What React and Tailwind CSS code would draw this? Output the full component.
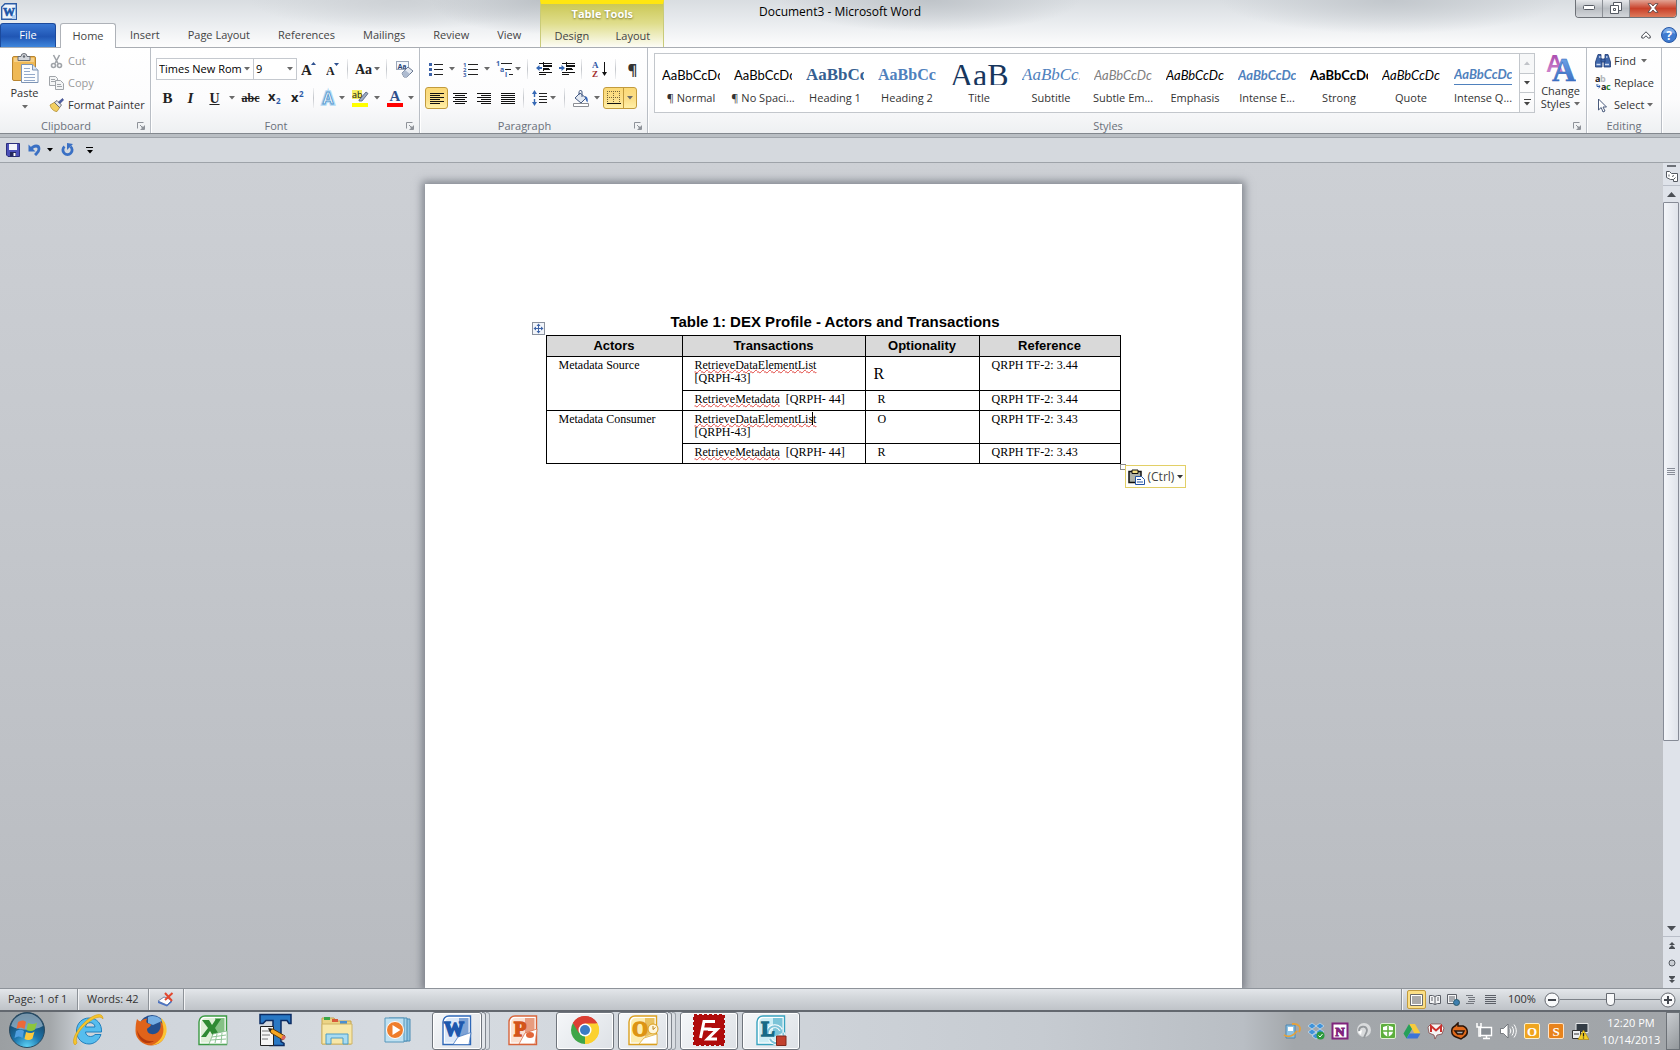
import React, { useState } from "react";
import clsx from "clsx";

const STYLES = [
    { name: "¶ Normal", sample: "AaBbCcDc", look: "font-['Lato'] text-[13px] text-black" },
    { name: "¶ No Spaci...", sample: "AaBbCcDc", look: "font-['Lato'] text-[13px] text-black" },
    { name: "Heading 1", sample: "AaBbCc", look: "font-['Liberation_Serif'] text-[17px] font-bold text-[#365f91]" },
    { name: "Heading 2", sample: "AaBbCc", look: "font-['Liberation_Serif'] text-[16px] font-bold text-[#4f81bd]" },
    { name: "Title", sample: "AaB", look: "font-['Liberation_Serif'] text-[32px] text-[#17365d]" },
    { name: "Subtitle", sample: "AaBbCc.", look: "font-['Liberation_Serif'] text-[17px] italic text-[#4f81bd]" },
    { name: "Subtle Em...", sample: "AaBbCcDc", look: "font-['Lato'] text-[13px] italic text-[#808080]" },
    { name: "Emphasis", sample: "AaBbCcDc", look: "font-['Lato'] text-[13px] italic text-black" },
    { name: "Intense E...", sample: "AaBbCcDc", look: "font-['Lato'] text-[13px] font-bold italic text-[#4f81bd]" },
    { name: "Strong", sample: "AaBbCcDc", look: "font-['Lato'] text-[13px] font-bold text-black" },
    { name: "Quote", sample: "AaBbCcDc", look: "font-['Lato'] text-[13px] italic text-black" },
    { name: "Intense Q...", sample: "AaBbCcDc", look: "font-['Lato'] text-[13px] font-bold italic text-[#4f81bd] border-b border-[#4f81bd]" },
];

/* ---------- small shared pieces ---------- */

function Arrow({ className = "text-[#6a6a6a]" }) {
    return (
        <svg width="6" height="4" viewBox="0 0 6 4" className={clsx("shrink-0", className)}>
            <path d="M0 0h6L3 3.6z" fill="currentColor" />
        </svg>
    );
}

function Tool({ label, className = "w-[23px]", children }) {
    return (
        <button type="button" aria-label={label} className={clsx("flex h-[22px] shrink-0 items-center justify-center", className)}>
            {children}
        </button>
    );
}

function Sep({ className = "mx-1" }) {
    return <span className={clsx("h-[20px] w-px shrink-0 bg-[linear-gradient(#f0f1f3,#c3c6cb,#f0f1f3)]", className)} />;
}

function Launcher() {
    return (
        <svg width="8" height="8" viewBox="0 0 8 8" fill="none" stroke="#8e9299">
            <path d="M.5 6.5v-6h6M3 3l4 4M7.5 3.5v4h-4" />
            <path d="M5 5h2v2H5z" fill="#8e9299" />
        </svg>
    );
}

function Group({ title, launcher, className, children }) {
    return (
        <section className={clsx("flex shrink-0 flex-col border-r border-[#b9bec5] shadow-[1px_0_0_#fff]", className)}>
            <div className="flex h-[68px]">{children}</div>
            <div className={clsx("relative flex h-[17px] items-center justify-center pt-0.5 leading-[15px] text-[#6a707a]", launcher && "pr-[18px]")}>
                {title}
                {launcher && (
                    <button type="button" aria-label={`${title} settings`} className="absolute right-[5px] top-[6px]">
                        <Launcher />
                    </button>
                )}
            </div>
        </section>
    );
}

/* ---------- title bar and tabs ---------- */

function WordMark() {
    return (
        <svg width="16" height="17" viewBox="0 0 16 17">
            <path d="M4 .7h11.3v15.6H.7V4z" fill="#eef5fd" stroke="#2d5ca6" strokeWidth="1.4" />
            <path d="M11 12h4v4h-4z" fill="#b6cfee" />
            <text x="8" y="12.5" textAnchor="middle" fontFamily="Liberation Serif" fontSize="12" fontWeight="bold" fill="#1d55a8" stroke="#1d55a8" strokeWidth=".6">W</text>
        </svg>
    );
}

function Header() {
    const tabs = ["Insert", "Page Layout", "References", "Mailings", "Review", "View"];
    return (
        <header className="relative flex h-12 shrink-0 items-end border-b border-[#a9adb3] bg-[radial-gradient(ellipse_110px_34px_at_540px_0,#bdc2c7,transparent),radial-gradient(ellipse_150px_30px_at_400px_0,#cdd1d5,transparent),radial-gradient(ellipse_150px_32px_at_930px_0,#bfc4c9,transparent),radial-gradient(ellipse_170px_34px_at_1390px_0,#c2c7cc,transparent),linear-gradient(#d9dde1,#e8ebee_45%,#fdfdfd)]">
            <div className="flex h-full flex-col pr-[5px]">
                <div className="flex h-6 items-center pl-px">
                    <WordMark />
                </div>
                <nav className="flex h-6 text-[#444]">
                    <button type="button" className="mr-1 h-6 w-14 rounded-t-[3px] border border-b-0 border-[#1c4a9c] bg-[linear-gradient(#3a78d4,#2056b4_55%,#3f86dc)] text-white">File</button>
                    <button type="button" className="-mb-px h-[25px] w-14 rounded-t-[3px] border border-b-0 border-[#aeb2b8] bg-white">Home</button>
                    {tabs.map((t) => (
                        <button key={t} type="button" className="px-[14px] pt-px">{t}</button>
                    ))}
                </nav>
            </div>
            <div className="flex h-full w-[124px] flex-col border-x border-[#c9cb7a] border-t-4 border-t-[#ffe610] bg-[linear-gradient(#cbc856,#dfdd8b_45%,#fdfdf6)]">
                <div className="flex h-5 items-center justify-center font-bold text-white [text-shadow:0_1px_2px_#7c7a2c]">Table Tools</div>
                <nav className="flex h-6 justify-around text-[#444]">
                    <button type="button" className="pt-px">Design</button>
                    <button type="button" className="pt-px">Layout</button>
                </nav>
            </div>
            <h1 className="pointer-events-none absolute inset-x-0 top-0 text-center text-xs leading-6 text-black">Document3 - Microsoft Word</h1>
            <div className="ml-auto flex h-full flex-col items-end pr-[3px]">
                <div className="flex h-[18px] overflow-hidden rounded-b-[4px] border border-t-0 border-[#6d7177]">
                    <button type="button" aria-label="Minimize" className="flex w-[27px] items-center justify-center border-r border-[#8b8f95] bg-[linear-gradient(#e6e8eb,#b9bdc2_50%,#d3d6da)]">
                        <svg width="12" height="6"><rect x=".5" y=".5" width="11" height="4" rx="1" fill="#fff" stroke="#555a63" /></svg>
                    </button>
                    <button type="button" aria-label="Restore" className="flex w-[27px] items-center justify-center border-r border-[#8b8f95] bg-[linear-gradient(#e6e8eb,#b9bdc2_50%,#d3d6da)]">
                        <svg width="12" height="12" fill="#fff" stroke="#555a63"><path d="M3.5.5h8v8h-8z" /><path d="M.5 3.5h8v8h-8z" /><path d="M3.5 6.5h2v2h-2z" /></svg>
                    </button>
                    <button type="button" aria-label="Close" className="flex w-[46px] items-center justify-center bg-[linear-gradient(#e2a394,#c9412a_50%,#de7a5b)]">
                        <svg width="12" height="10" viewBox="0 0 12 10"><path d="M1 .7h3l2 2.300 2-2.300h3L7.700 5 11 9.300H8L6 7 4 9.300H1L4.300 5z" fill="#fff" stroke="#5d4747" strokeWidth=".9" /></svg>
                    </button>
                </div>
                <div className="flex h-[30px] items-center gap-[10px] pt-[5px]">
                    <button type="button" aria-label="Minimize the ribbon">
                        <svg width="10" height="8" viewBox="0 0 10 8" fill="#fff" stroke="#44484f"><path d="M5 .8 9.200 5v2H7.300L5 4.800 2.700 7H.8V5z" /></svg>
                    </button>
                    <button type="button" aria-label="Help">
                        <svg width="16" height="16" viewBox="0 0 16 16">
                            <circle cx="8" cy="8" r="7.5" fill="#3f7bd0" stroke="#2a59a5" />
                            <path d="M2 7a6 6 0 0 1 12 0C11 5 5 5 2 7z" fill="#7aa9e6" />
                            <text x="8" y="12.5" textAnchor="middle" fontFamily="Open Sans" fontSize="12" fontWeight="bold" fill="#fff">?</text>
                        </svg>
                    </button>
                </div>
            </div>
        </header>
    );
}

/* ---------- ribbon groups ---------- */

function ClipboardGroup() {
    return (
        <Group title="Clipboard" launcher className="w-[151px]">
            <button type="button" className="flex w-[49px] flex-col items-center pt-[5px] text-[#333]">
                <svg width="28" height="31" viewBox="0 0 28 31">
                    <rect x="1.500" y="3.500" width="23" height="24" rx="1.500" fill="#efb956" stroke="#b98530" />
                    <path d="M3 5h20v4H3z" fill="#f6d08a" />
                    <path d="M7 3.500h3a3 3 0 0 1 6 0h3v4H7z" fill="#d4d7dc" stroke="#666b74" />
                    <circle cx="13" cy="3.500" r="1.200" fill="#666b74" />
                    <path d="M10.500 11.500h11l5.500 5.500v12.500H10.500z" fill="#fbfdff" stroke="#7d94b5" />
                    <path d="M21.500 11.500V17H27" fill="#d7e3f3" stroke="#7d94b5" />
                    <path d="M13 15.500h6M13 18.500h6M13 21.500h11M13 24.500h11M13 27.500h11" stroke="#93a9ca" />
                </svg>
                <span className="leading-[18px]">Paste</span>
                <Arrow className="mt-[3px] text-[#6a6a6a]" />
            </button>
            <div className="flex flex-col items-start pt-0.5">
                <button type="button" className="flex h-[22px] items-center gap-1 text-[#9a9a9a]">
                    <svg width="15" height="15" viewBox="0 0 15 15" fill="none" stroke="#9fa3a8" strokeWidth="1.600">
                        <path d="M4.500 1 9 9.500M10.500 1 6 9.500" /><circle cx="4.500" cy="11.500" r="2" /><circle cx="10.500" cy="11.500" r="2" />
                    </svg>
                    Cut
                </button>
                <button type="button" className="flex h-[22px] items-center gap-1 text-[#9a9a9a]">
                    <svg width="15" height="14" viewBox="0 0 15 14" fill="#f4f5f6" stroke="#a0a4a9">
                        <path d="M.5.5h6l2 2v7h-8z" /><path d="M2 3.500h4M2 5.500h4" /><path d="M6.500 4.500h5l3 3v6h-8z" /><path d="M8 8.500h4M8 10.500h5" />
                    </svg>
                    Copy
                </button>
                <button type="button" className="flex h-[22px] items-center gap-1 whitespace-nowrap text-[#333]">
                    <svg width="15" height="14" viewBox="0 0 15 14">
                        <path d="M1 7l5-3 5 5-3 4.500c-3 0-6-2.500-7-6.500z" fill="#f2cf62" stroke="#a98325" strokeWidth=".7" />
                        <path d="M5.500 4.500 8 2.500l4.500 4.500-2 2.500z" fill="#e2e5ea" stroke="#4b4f5a" strokeWidth=".8" />
                        <path d="m9.500 4 4-3.500L14.500 2 11 5.500z" fill="#4b5ea8" stroke="#2e3a75" strokeWidth=".6" />
                    </svg>
                    Format Painter
                </button>
            </div>
        </Group>
    );
}

function FontGroup() {
    return (
        <Group title="Font" launcher className="w-[269px]">
            <div className="flex flex-col gap-[7px] pl-[5px] pt-[10px]">
                <div className="flex items-center">
                    <label className="relative">
                        <select aria-label="Font" className="h-[22px] w-[98px] appearance-none border border-[#c5c9cf] bg-white pl-0.5 text-[11px] text-black">
                            <option>Times New Rom</option>
                        </select>
                        <span className="pointer-events-none absolute right-1 top-[9px]"><Arrow /></span>
                    </label>
                    <label className="relative -ml-px">
                        <select aria-label="Font size" className="h-[22px] w-[44px] appearance-none border border-[#c5c9cf] bg-white pl-0.5 text-[11px] text-black">
                            <option>9</option>
                        </select>
                        <span className="pointer-events-none absolute right-1 top-[9px]"><Arrow /></span>
                    </label>
                    <Tool label="Grow font" className="w-[24px]">
                        <svg width="16" height="16" viewBox="0 0 16 16"><text x="0" y="14" fontFamily="Liberation Serif" fontSize="15" fontWeight="bold" fill="#222">A</text><path d="m10 4 2.500-3L15 4z" fill="#2d4f8f" /></svg>
                    </Tool>
                    <Tool label="Shrink font">
                        <svg width="14" height="16" viewBox="0 0 14 16"><text x="0" y="14" fontFamily="Liberation Serif" fontSize="12" fontWeight="bold" fill="#222">A</text><path d="m8 2 2.500 3L13 2z" fill="#2d4f8f" /></svg>
                    </Tool>
                    <Sep className="ml-[3px] mr-[6px]" />
                    <Tool label="Change case" className="w-[27px] gap-0.5">
                        <span className="font-['Liberation_Serif'] text-[14px] font-bold text-[#222]">Aa</span><Arrow />
                    </Tool>
                    <Sep className="ml-[5px] mr-[6px]" />
                    <Tool label="Clear formatting">
                        <svg width="18" height="17" viewBox="0 0 18 17">
                            <rect x=".5" y=".5" width="12" height="8" fill="#f4f8fd" stroke="#9aa7ba" />
                            <text x="1.500" y="7.500" fontFamily="Liberation Sans" fontSize="7" fontWeight="bold" fill="#223f74">Aa</text>
                            <path d="m6 12 6-6 5 4-6 6H8z" fill="#e3e9f2" stroke="#69778f" /><path d="m6 12 3-3 5 4-3 3H8z" fill="#aebbd0" />
                        </svg>
                    </Tool>
                </div>
                <div className="flex items-center text-[#222]">
                    <Tool label="Bold"><b className="font-['Liberation_Serif'] text-[15px]">B</b></Tool>
                    <Tool label="Italic"><i className="font-['Liberation_Serif'] text-[15px] font-bold">I</i></Tool>
                    <Tool label="Underline" className="w-[25px]"><u className="font-['Liberation_Serif'] text-[14px] font-bold">U</u></Tool>
                    <Tool label="Underline style" className="w-[10px]"><Arrow /></Tool>
                    <Tool label="Strikethrough" className="w-[27px]"><s className="font-['Liberation_Serif'] text-[12px] font-bold">abc</s></Tool>
                    <Tool label="Subscript">
                        <svg width="15" height="16" viewBox="0 0 15 16" className="overflow-visible"><text x="0" y="11" fontFamily="Open Sans" fontSize="13" fontWeight="bold" fill="#222">x</text><text x="8" y="14" fontFamily="Open Sans" fontSize="8" fontWeight="bold" fill="#2d5aa8">2</text></svg>
                    </Tool>
                    <Tool label="Superscript" className="w-[22px]">
                        <svg width="15" height="16" viewBox="0 0 15 16" className="overflow-visible"><text x="0" y="12" fontFamily="Open Sans" fontSize="13" fontWeight="bold" fill="#222">x</text><text x="8" y="7" fontFamily="Open Sans" fontSize="8" fontWeight="bold" fill="#2d5aa8">2</text></svg>
                    </Tool>
                    <Sep className="ml-[4px] mr-[4px]" />
                    <Tool label="Text effects" className="w-[28px] gap-0.5">
                        <svg width="18" height="18" viewBox="0 0 18 18" className="overflow-visible"><text x="9" y="15" textAnchor="middle" fontFamily="Liberation Sans" fontSize="16" fontWeight="bold" fill="#fff" stroke="#b5daf5" strokeWidth="3.500">A</text><text x="9" y="15" textAnchor="middle" fontFamily="Liberation Sans" fontSize="16" fontWeight="bold" fill="#fff" stroke="#5a9bd0" strokeWidth="1">A</text></svg>
                        <Arrow />
                    </Tool>
                    <Tool label="Highlight colour" className="ml-[6px] w-[28px] gap-[5px]">
                        <svg width="17" height="17" viewBox="0 0 17 17"><path d="M0 0h10v9H0z" fill="#f5ef62" /><text x="0" y="8" fontFamily="Open Sans" fontSize="9" fill="#111">ab</text><path d="m7 10 7-8 2 1.500L10 11H7z" fill="#9dabc4" stroke="#4d5a78" strokeWidth=".8" /><path d="M0 13h16v4H0z" fill="#ff0" /></svg>
                        <Arrow />
                    </Tool>
                    <Tool label="Font colour" className="ml-[6px] w-[28px] gap-[5px]">
                        <svg width="16" height="17" viewBox="0 0 16 17"><text x="8" y="11" textAnchor="middle" fontFamily="Liberation Serif" fontSize="15" fontWeight="bold" fill="#2f4f8b">A</text><path d="M0 13h16v4H0z" fill="#f00" /></svg>
                        <Arrow />
                    </Tool>
                </div>
            </div>
        </Group>
    );
}

const LEFT = [[0, 14], [0, 10], [0, 14], [0, 10], [0, 14], [0, 10]];
const CENTER = [[0, 14], [2, 10], [0, 14], [2, 10], [0, 14], [2, 10]];
const RIGHT = [[0, 14], [4, 10], [0, 14], [4, 10], [0, 14], [4, 10]];
const FULL = [[0, 14], [0, 14], [0, 14], [0, 14], [0, 14], [0, 14]];

function AlignIcon({ rows }) {
    return (
        <svg width="14" height="13" viewBox="0 0 14 13" stroke="#111">
            {rows.map(([x, w], i) => <path key={i} d={`M${x} ${i * 2 + 1.5}h${w}`} />)}
        </svg>
    );
}

function IndentIcon({ back }) {
    return (
        <svg width="17" height="14" viewBox="0 0 17 14">
            <path d="M3 1.500h13M7 4.500h9M7 7.500h7M3 10.500h13M3 12.500h7" stroke="#111" />
            <path d="M7 3.500h9M7 6.500h6" stroke="#111" />
            <path d="M7.500 0v14" stroke="#111" strokeDasharray="1 1" />
            <path d={back ? "M0 6 3.500 3v2H6v2H3.500v2z" : "M6 6 2.500 3v2H0v2h2.500v2z"} fill="#3568b5" />
        </svg>
    );
}

function ParagraphGroup() {
    return (
        <Group title="Paragraph" launcher className="w-[228px]">
            <div className="flex flex-col gap-[7px] pl-[5px] pt-[10px]">
                <div className="flex items-center">
                    <Tool label="Bullets" className="w-[34px] gap-[6px]">
                        <svg width="14" height="14" viewBox="0 0 14 14"><path d="M0 1h3v3H0zM0 6h3v3H0zM0 11h3v3H0z" fill="#3c62a8" /><path d="M5 2.500h9M5 7.500h9M5 12.500h9" stroke="#222" /></svg>
                        <Arrow />
                    </Tool>
                    <Tool label="Numbering" className="w-[35px] gap-[6px]">
                        <svg width="15" height="15" viewBox="0 0 15 15"><g fontFamily="Open Sans" fontSize="6" fontWeight="bold" fill="#3c62a8"><text x="0" y="5">1</text><text x="0" y="10">2</text><text x="0" y="15">3</text></g><path d="M5 2.500h10M5 7.500h10M5 12.500h10" stroke="#222" /></svg>
                        <Arrow />
                    </Tool>
                    <Tool label="Multilevel list" className="w-[28px] gap-[2px]">
                        <svg width="17" height="16" viewBox="0 0 17 16"><g fontFamily="Open Sans" fontSize="7" fontWeight="bold" fill="#3c62a8"><text x="0" y="5">1</text><text x="4" y="11">a</text><text x="9" y="16">i</text></g><path d="M5 2.500h11M9 8.500h6M13 13.500h4" stroke="#222" /></svg>
                        <Arrow />
                    </Tool>
                    <Sep className="ml-[5px] mr-[5px]" />
                    <Tool label="Decrease indent"><IndentIcon back /></Tool>
                    <Tool label="Increase indent"><IndentIcon /></Tool>
                    <Sep className="ml-[2px] mr-[6px]" />
                    <Tool label="Sort">
                        <svg width="16" height="16" viewBox="0 0 16 16"><g fontFamily="Liberation Serif" fontSize="9" fontWeight="bold"><text x="0" y="7" fill="#2f58a5">A</text><text x="0" y="15.500" fill="#a12c2c">Z</text></g><path d="M12.500 1v11" stroke="#111" /><path d="M10 11h5l-2.500 4z" fill="#111" /></svg>
                    </Tool>
                    <Sep className="ml-[4px] mr-[5px]" />
                    <Tool label="Show marks"><span className="text-[15px] font-bold text-[#333]">¶</span></Tool>
                </div>
                <div className="flex items-center">
                    <Tool label="Align left" className="w-[23px] rounded-[3px] border border-[#c29b3d] bg-[linear-gradient(#fbd977,#fbe08c_60%,#fff0a8)]"><AlignIcon rows={LEFT} /></Tool>
                    <Tool label="Center" className="w-[24px]"><AlignIcon rows={CENTER} /></Tool>
                    <Tool label="Align right" className="w-[24px]"><AlignIcon rows={RIGHT} /></Tool>
                    <Tool label="Justify"><AlignIcon rows={FULL} /></Tool>
                    <Sep className="mx-[4px]" />
                    <Tool label="Line spacing" className="w-[32px] gap-0.5">
                        <svg width="16" height="16" viewBox="0 0 16 16"><path d="M0 4 2.500 0 5 4H3.200v3H1.800V4zM0 12l2.500 4L5 12H3.200V9H1.800v3z" fill="#3568b5" /><path d="M7 3.500h8M7 6.500h8M7 9.500h8M7 12.500h8" stroke="#222" /></svg>
                        <Arrow />
                    </Tool>
                    <Sep className="mx-[4px]" />
                    <Tool label="Shading" className="w-[34px] gap-[5px]">
                        <svg width="16" height="17" viewBox="0 0 16 17"><path d="m2 8 5-5 6 5-5 5z" fill="#e3e9f2" stroke="#445a83" /><path d="M6 5V1.500C7 0 9 0 9 2v5" fill="none" stroke="#445a83" /><path d="M12 6c3 1 3 4 2.500 6.500C13 11 12 9 12 6z" fill="#3a69b8" /><path d="M.5 13.500h15v3H.5z" fill="#fff" stroke="#8c8f95" /></svg>
                        <Arrow />
                    </Tool>
                    <div className="flex h-[22px] w-[34px] overflow-hidden rounded-[3px] border border-[#c29b3d] bg-[linear-gradient(#fbd977,#fbe08c_60%,#fff0a8)]">
                        <button type="button" aria-label="Bottom border" className="flex w-[20px] items-center justify-center border-r border-[#c29b3d]">
                            <svg width="14" height="14" viewBox="0 0 14 14"><path d="M.5 0v12M6.500 0v12M12.500 0v12M0 .5h13M0 6.500h13" stroke="#75653b" strokeDasharray="1 1" /><path d="M0 12.500h14" stroke="#111" strokeWidth="1" /></svg>
                        </button>
                        <button type="button" aria-label="Border options" className="flex w-[12px] items-center justify-center"><Arrow /></button>
                    </div>
                </div>
            </div>
        </Group>
    );
}

function StylesGroup() {
    return (
        <Group title="Styles" launcher className="min-w-0 flex-1">
            <div className="mt-[5px] flex h-[60px] min-w-0 flex-1 pl-[6px]">
                <div className="flex min-w-0 flex-1 overflow-hidden border border-[#c3c7cc] bg-white">
                    {STYLES.map((s) => (
                        <button key={s.name} type="button" className="flex w-[72px] shrink-0 flex-col items-center pt-[8px] text-[#333]">
                            <span className={clsx("flex h-[23px] w-[58px] items-end overflow-hidden whitespace-nowrap leading-[20px]", s.look)}>{s.sample}</span>
                            <span className="mt-[5px] whitespace-nowrap leading-[16px]">{s.name}</span>
                        </button>
                    ))}
                </div>
                <div className="flex w-[15px] flex-col border border-l-0 border-[#c3c7cc]">
                    <button type="button" aria-label="Scroll up" className="flex flex-1 items-center justify-center bg-[#f6f7f8]"><Arrow className="rotate-180 text-[#c0c3c8]" /></button>
                    <button type="button" aria-label="Scroll down" className="flex flex-1 items-center justify-center border-y border-[#c3c7cc]"><Arrow className="text-[#444]" /></button>
                    <button type="button" aria-label="More styles" className="flex flex-1 flex-col items-center justify-center gap-0.5"><span className="h-px w-[7px] bg-[#444]" /><Arrow className="text-[#444]" /></button>
                </div>
            </div>
            <button type="button" className="flex w-[51px] shrink-0 flex-col items-center pt-[5px] leading-[13px] text-[#333]">
                <svg width="30" height="31" viewBox="0 0 30 31">
                    <defs>
                        <linearGradient id="csA" x2="0" y2="1"><stop stopColor="#a13fa8" /><stop offset="1" stopColor="#d691d3" /></linearGradient>
                        <linearGradient id="csB" x2="0" y2="1"><stop stopColor="#7ab0ef" /><stop offset="1" stopColor="#2e63bd" /></linearGradient>
                    </defs>
                    <text x="0" y="19" fontFamily="Liberation Sans" fontSize="24" fontWeight="bold" fill="url(#csA)">A</text>
                    <text x="6" y="28" fontFamily="Liberation Serif" fontSize="33" fontWeight="bold" fill="url(#csB)" stroke="#3565b8" strokeWidth=".5">A</text>
                </svg>
                <span>Change</span>
                <span className="flex items-center gap-1">Styles <Arrow /></span>
            </button>
        </Group>
    );
}

function EditingGroup() {
    return (
        <Group title="Editing" className="w-[75px]">
            <div className="flex flex-col items-start pl-[8px] pt-0.5 text-[#333]">
                <button type="button" className="flex h-[22px] items-center gap-[3px]">
                    <svg width="16" height="14" viewBox="0 0 16 14" fill="#3f67ab" stroke="#1f3b73" strokeWidth=".8">
                        <path d="M3 .5h3V4l1 2v7H.5V8z" /><path d="M10 .5h3L15.500 8v5H9V6l1-2z" /><path d="M6 5h4v3H6z" /><path d="M1.500 10.500h4M10 10.500h4M4 3h1.500M11 3h1.500" stroke="#cfdcf2" strokeWidth="1.500" />
                    </svg>
                    Find <Arrow className="ml-0.5 text-[#6a6a6a]" />
                </button>
                <button type="button" className="flex h-[22px] items-center gap-[3px]">
                    <svg width="16" height="16" viewBox="0 0 16 16" fontFamily="Open Sans" fontSize="9" fontWeight="bold">
                        <text x="0" y="7" fill="#222">a</text><text x="5" y="7" fill="#b3b6ba">b</text><text x="6" y="15" fill="#222">a</text><text x="11" y="15" fill="#1f8a2d">c</text>
                        <path d="M2 9v2.500h3M3.500 10l1.700 1.500L3.500 13" fill="none" stroke="#2d5aa8" />
                    </svg>
                    Replace
                </button>
                <button type="button" className="flex h-[22px] items-center gap-[3px]">
                    <svg width="16" height="15" viewBox="0 0 16 15"><path d="M3.500 1v11l2.700-2.500L8 14l2-1-2-4h3.500z" fill="#fff" stroke="#4a5b7c" /></svg>
                    Select <Arrow />
                </button>
            </div>
        </Group>
    );
}

function QuickAccess() {
    return (
        <div className="mt-[3px] flex h-[26px] shrink-0 items-center border-y border-[#9ea3a9] bg-[#d5d9de] pl-[6px]">
            <button type="button" aria-label="Save">
                <svg width="14" height="14" viewBox="0 0 14 14"><path d="M.5.5h13v13H2l-1.500-1.500z" fill="#4b50b8" stroke="#2b2f7d" /><path d="M3 1h8v6H3z" fill="#f2f4fb" /><path d="M4 9h6v4.500H4z" fill="#25285e" /><path d="M7.500 10h2v3h-2z" fill="#fff" /></svg>
            </button>
            <button type="button" aria-label="Undo" className="ml-[8px]">
                <svg width="13" height="14" viewBox="0 0 13 14"><path d="M3 6c3-4 8-4 8 0 0 3-2 4-4 6" fill="none" stroke="#3a70c4" strokeWidth="2.800" /><path d="M.5 1.500v7h7z" fill="#3a70c4" /></svg>
            </button>
            <button type="button" aria-label="Undo history" className="ml-[6px]"><Arrow className="text-black" /></button>
            <button type="button" aria-label="Repeat" className="ml-[8px]">
                <svg width="13" height="14" viewBox="0 0 13 14"><path d="M3.500 3.500a4.600 4.600 0 1 0 6 0" fill="none" stroke="#3a70c4" strokeWidth="2.800" /><path d="M6 0v7l6-6z" fill="#3a70c4" /></svg>
            </button>
            <button type="button" aria-label="Customize" className="ml-[12px] flex flex-col items-center gap-0.5"><span className="h-px w-[7px] bg-black" /><Arrow className="text-black" /></button>
        </div>
    );
}

/* ---------- document ---------- */

function Misspelt({ children }) {
    return <span className="underline decoration-[#e0443e] decoration-wavy decoration-1 underline-offset-0">{children}</span>;
}

function ActorsTable() {
    const cell = "border border-black px-3 pt-[2px] align-top";
    return (
        <div className="relative mx-auto w-[575px]">
            <table className="w-full table-fixed border-collapse font-['Liberation_Serif',serif] text-xs leading-[13px] text-black">
                <caption className="pb-[3px] pl-[4px] font-['Liberation_Sans',sans-serif] text-[15px] font-bold leading-5">Table 1: DEX Profile - Actors and Transactions</caption>
                <colgroup>
                    <col className="w-[136px]" /><col className="w-[183px]" /><col className="w-[114px]" /><col />
                </colgroup>
                <thead>
                    <tr className="h-[21px] bg-[#d9d9d9] font-['Liberation_Sans',sans-serif] text-[13px]">
                        {["Actors", "Transactions", "Optionality", "Reference"].map((h) => (
                            <th key={h} scope="col" className="border border-black pb-[2px] font-bold">{h}</th>
                        ))}
                    </tr>
                </thead>
                <tbody>
                    <tr className="h-[34px]">
                        <td rowSpan={2} className={cell}>Metadata Source</td>
                        <td className={cell}><Misspelt>RetrieveDataElementList</Misspelt><br />[QRPH-43]</td>
                        <td className="border border-black px-2 text-base">R</td>
                        <td className={cell}>QRPH TF-2: 3.44</td>
                    </tr>
                    <tr className="h-[20px]">
                        <td className={cell}><Misspelt>RetrieveMetadata</Misspelt>&nbsp; [QRPH- 44]</td>
                        <td className={cell}>R</td>
                        <td className={cell}>QRPH TF-2: 3.44</td>
                    </tr>
                    <tr className="h-[33px]">
                        <td rowSpan={2} className={cell}>Metadata Consumer</td>
                        <td className={cell}>
                            <span className="relative">
                                <Misspelt>RetrieveDataElementList</Misspelt>
                                <span className="absolute right-[3px] top-0 h-[13px] w-px bg-black" />
                            </span>
                            <br />[QRPH-43]
                        </td>
                        <td className={cell}>O</td>
                        <td className={cell}>QRPH TF-2: 3.43</td>
                    </tr>
                    <tr className="h-[20px]">
                        <td className={cell}><Misspelt>RetrieveMetadata</Misspelt>&nbsp; [QRPH- 44]</td>
                        <td className={cell}>R</td>
                        <td className={cell}>QRPH TF-2: 3.43</td>
                    </tr>
                </tbody>
            </table>
            {/* table handles and paste options float beside the table */}
            <svg width="13" height="13" viewBox="0 0 13 13" className="absolute -left-[14px] top-[10px]">
                <rect x=".5" y=".5" width="12" height="12" fill="#f2f5fa" stroke="#8b929e" />
                <path d="M6.500 2v9M2 6.500h9" stroke="#3e64a8" /><path d="m4.500 4 2-2.500 2 2.500zM4.500 9l2 2.500 2-2.500zM4 4.500 1.500 6.500 4 8.500zM9 4.500l2.500 2L9 8.500z" fill="#3e64a8" />
            </svg>
            <span className="absolute -right-[5px] -bottom-[6px] h-[6px] w-[6px] border border-[#8a8a8a] bg-white" />
            <button type="button" className="absolute left-full top-full ml-[4px] mt-[1px] flex h-[23px] w-[61px] items-center gap-[3px] border border-[#e2cf66] bg-[#fffffb] pl-0.5 text-xs text-[#444]">
                <svg width="17" height="16" viewBox="0 0 17 16">
                    <path d="M1 2.500h12v11H1z" fill="#aeb2a8" stroke="#111" strokeWidth="1.500" /><path d="M4 1h6v3.500H4z" fill="#f3df85" stroke="#111" />
                    <path d="M7.500 7.500h6l3 3v5h-9z" fill="#fff" stroke="#2354a5" /><path d="M9 10.500h4M9 13h6" stroke="#2354a5" />
                </svg>
                (Ctrl)
                <Arrow className="text-[#333]" />
            </button>
        </div>
    );
}

function ScrollBar() {
    return (
        <aside className="flex w-[17px] shrink-0 flex-col items-center bg-[#dfe3ea] text-[#4b4f55]">
            <span className="mt-[2px] h-[2px] w-[9px] bg-[#6d7178]" />
            <button type="button" aria-label="Toggle ruler" className="mt-[3px]">
                <svg width="12" height="12" viewBox="0 0 12 12" fill="#fff" stroke="#555a62"><path d="M.5 1.500h3l2 2h6v8h-4v-2h-3l-4-2z" /><path d="M3 4.500v2M6 6.500l2-1M7.500 9.500l2-2" /></svg>
            </button>
            <button type="button" aria-label="Scroll page up" className="mt-[3px] flex h-[17px] w-full items-center justify-center border-t border-[#b9bec8]">
                <svg width="9" height="5"><path d="M0 5 4.500 0 9 5z" fill="currentColor" /></svg>
            </button>
            <div className="flex w-full flex-1 flex-col items-start">
                <div className="flex h-3/4 w-[16px] items-center justify-center rounded-[1px] border border-[#868b96] bg-[linear-gradient(90deg,#f4f6fa,#dfe3ea)]">
                    <span className="h-[7px] w-[8px] bg-[repeating-linear-gradient(#888d98_0_1px,transparent_1px_2px)]" />
                </div>
            </div>
            <button type="button" aria-label="Scroll page down" className="flex h-[17px] w-full items-center justify-center border-b border-[#b9bec8]">
                <svg width="9" height="5"><path d="M0 0h9L4.500 5z" fill="currentColor" /></svg>
            </button>
            <button type="button" aria-label="Previous page" className="flex h-[17px] items-center"><svg width="6" height="7"><path d="m0 3 3-3 3 3zM0 6l3-3 3 3v1H0z" fill="currentColor" /></svg></button>
            <button type="button" aria-label="Browse object" className="flex h-[17px] items-center"><svg width="8" height="8"><circle cx="4" cy="4" r="3" fill="#c9cdd3" stroke="#555a62" /></svg></button>
            <button type="button" aria-label="Next page" className="flex h-[17px] items-center"><svg width="6" height="7"><path d="M0 0h6v1L3 4 0 1zM0 4h6L3 7z" fill="currentColor" /></svg></button>
        </aside>
    );
}

/* ---------- status bar ---------- */

function StatusBar() {
    const [zoom, setZoom] = useState(50);
    const mark = "h-full w-px bg-[#8d9298] shadow-[1px_0_0_#f3f4f6]";
    return (
        <footer className="flex h-[22px] shrink-0 items-center border-t border-[#8e939a] bg-[linear-gradient(#e3e6ea,#d3d7db_40%,#bfc3c8)] text-[#333]">
            <span className="w-[77px] pl-[8px]">Page: 1 of 1</span>
            <span className={mark} />
            <span className="w-[70px] pl-[9px]">Words: 42</span>
            <span className={mark} />
            <button type="button" aria-label="Proofing errors" className="flex w-[34px] justify-center">
                <svg width="18" height="15" viewBox="0 0 18 15"><path d="m1 9 6-4 8 3-5 5z" fill="#fff" stroke="#7787a8" /><path d="m1 9 9 4v1.500L1 11zM10 13l5-5v2l-5 4.500z" fill="#4a72c4" /><path d="m8 1 7 8M15.500 1 8 8" stroke="#e2482f" strokeWidth="2" /></svg>
            </button>
            <span className={mark} />
            <span className={clsx(mark, "ml-auto")} />
            <div className="flex items-center pl-[5px]">
                <button type="button" aria-label="Print layout" className="flex h-[19px] w-[19px] items-center justify-center rounded-[2px] border border-[#c29b3d] bg-[#fbdf86]">
                    <svg width="13" height="12"><path d="M.5.5h12v11H.5z" fill="#fff" stroke="#6a6a6a" /><path d="M2 3h9M2 5h9M2 7h9M2 9h9" stroke="#555" /></svg>
                </button>
                <button type="button" aria-label="Full screen reading" className="flex w-[18px] justify-center">
                    <svg width="12" height="12" fill="#f4f5f6" stroke="#5c6068"><path d="M.5 1.500h3l2.500 1 2.500-1h3v8h-3L6 10.500l-2.500-1h-3zM6 2.500v8M2 4h2M2 6h2M8 4h2M8 6h2" /></svg>
                </button>
                <button type="button" aria-label="Web layout" className="flex w-[18px] justify-center">
                    <svg width="13" height="12"><path d="M.5.5h9v9h-9z" fill="#f4f5f6" stroke="#5c6068" /><path d="M2 3h6M2 5h6M2 7h4" stroke="#5c6068" /><circle cx="9.500" cy="8.500" r="3" fill="#3d7fb0" stroke="#2b5a6b" /></svg>
                </button>
                <button type="button" aria-label="Outline" className="flex w-[18px] justify-center">
                    <svg width="10" height="11" stroke="#73777e"><path d="M0 1.500h7M2 3.500h7M3 5.500h6M2 7.500h7M0 9.500h8" /></svg>
                </button>
                <button type="button" aria-label="Draft" className="flex w-[20px] justify-center">
                    <svg width="11" height="11" stroke="#5c6068"><path d="M0 1.500h11M0 3.500h11M0 5.500h11M0 7.500h11M0 9.500h11" /></svg>
                </button>
            </div>
            <span className="ml-[8px] w-[36px]">100%</span>
            <button type="button" aria-label="Zoom out">
                <svg width="16" height="16"><circle cx="8" cy="8" r="7" fill="#f8f9fa" stroke="#666a71" /><path d="M4 8h8" stroke="#44484f" strokeWidth="2" /></svg>
            </button>
            <input
                type="range"
                aria-label="Zoom"
                value={zoom}
                onChange={(e) => setZoom(e.target.value)}
                className="h-[16px] w-[100px] appearance-none bg-[linear-gradient(#7d8289,#7d8289)] bg-[length:100%_1px] bg-center bg-no-repeat [&::-webkit-slider-thumb]:h-[13px] [&::-webkit-slider-thumb]:w-[9px] [&::-webkit-slider-thumb]:appearance-none [&::-webkit-slider-thumb]:rounded-b-[4px] [&::-webkit-slider-thumb]:border [&::-webkit-slider-thumb]:border-[#666a71] [&::-webkit-slider-thumb]:bg-[#f8f9fa]"
            />
            <button type="button" aria-label="Zoom in" className="mr-[4px]">
                <svg width="16" height="16"><circle cx="8" cy="8" r="7" fill="#f8f9fa" stroke="#666a71" /><path d="M4 8h8M8 4v8" stroke="#44484f" strokeWidth="2" /></svg>
            </button>
        </footer>
    );
}

/* ---------- taskbar ---------- */

function OfficeIcon({ letter, dark, mid, light, children }) {
    return (
        <svg width="32" height="31" viewBox="0 0 32 31">
            <path d="M8 1h21.500v28.500H2V7c0-3.500 2.500-6 6-6z" fill="#fff" stroke={mid} strokeWidth="1.400" />
            <path d="M8.500 3h19v24.500H4V8c0-3 2-5 4.500-5z" fill={light} />
            <path d="M18 3h9.500v15L18 22z" fill={mid} opacity=".55" />
            {children || <path d="m17 22 13-4.500-2 12H12z" fill="#fff" stroke={mid} strokeWidth=".7" />}
            <text x="13" y="21" textAnchor="middle" fontFamily="Liberation Serif" fontSize="20" fontWeight="bold" fill={dark} stroke={dark} strokeWidth="1.600">{letter}</text>
        </svg>
    );
}

function TaskItem({ label, open, stack, children }) {
    return (
        <div className="flex h-full w-[62px] shrink-0 px-0.5">
            <button
                type="button"
                aria-label={label}
                className={clsx("flex flex-1 items-center justify-center pb-0.5", open && "rounded-[3px] border border-[#6f757d] bg-[linear-gradient(135deg,#f5f7f9,#dde1e6)] shadow-[inset_0_0_0_1px_#fff]")}
            >
                {children}
            </button>
            {stack && <span className="w-[4px] rounded-r-[3px] border-y border-r border-[#7f858d] bg-[#e3e6ea]" />}
            {stack && <span className="w-[4px] rounded-r-[3px] border-y border-r border-[#9aa0a8] bg-[#d9dde2]" />}
        </div>
    );
}

function TrayItem({ label, children }) {
    return (
        <button type="button" aria-label={label} className="flex w-6 shrink-0 items-center justify-center">
            <svg width="18" height="18" viewBox="0 0 18 18">{children}</svg>
        </button>
    );
}

function Taskbar() {
    return (
        <nav className="flex h-10 shrink-0 border-t-2 border-[#63686f] bg-[linear-gradient(90deg,#9b9fa2,#a3a7aa_50px,#cfd4da_85px,#d6dbe1_25%,#ced3d9_48%,#c6cbd1_62%,#b9bec4_74%,#a3a7ab_77%,#a1a5a9)]">
            <button type="button" aria-label="Start" className="flex w-[58px] shrink-0 items-center pl-[8px] pb-0.5">
                <svg width="38" height="38" viewBox="0 0 38 38">
                    <defs>
                        <radialGradient id="orb" cx=".5" cy="1" r=".9"><stop stopColor="#5fd8fb" /><stop offset=".45" stopColor="#1d76ad" /><stop offset="1" stopColor="#16405f" /></radialGradient>
                    </defs>
                    <circle cx="19" cy="19" r="17.500" fill="url(#orb)" stroke="#2b4a5f" />
                    <path d="M3 15a16.500 16.500 0 0 1 32 0C26 20 12 20 3 15z" fill="#b9cfdd" opacity=".6" />
                    <path d="M10 11c3-2 6-2 8 0l-1.500 7c-2.500-2-5-2-8 0z" fill="#ec6a38" />
                    <path d="M20 12c3 1.500 6 1.500 9-.5l-2 7c-3 2-6 2-8.500.5z" fill="#8cc63c" />
                    <path d="M8 20c3-2 5.500-2 8 0l-1.500 7c-2.500-2-5-2-8 0z" fill="#4f9fdf" />
                    <path d="M18 21c3 1.500 6 1.500 8.500-.5l-2 7c-3 2-5.500 2-8 .5z" fill="#fcc93c" />
                </svg>
            </button>
            <TaskItem label="Internet Explorer">
                <svg width="34" height="34" viewBox="0 0 34 34">
                    <path d="M17 5c8 0 13 6 12.500 14H13.500c.3 3 2.200 4.500 5 4.500 2 0 3.500-.8 4.500-2h6C27 27 22.500 31 17 31 10 31 4.500 25.500 4.500 18S10 5 17 5zm-3.500 9h9.500c-.3-2.800-2.200-4.300-4.800-4.300s-4.300 1.500-4.700 4.300z" fill="#56bdee" stroke="#1f7fbd" strokeWidth="1" />
                    <path d="M3 32C-2 28 6 13 18 5c7-4.500 13-5 13 1-2-3-7-2-12 1.500C9 14 2 24 5 30z" fill="#f6c52c" stroke="#d19a12" strokeWidth=".6" />
                </svg>
            </TaskItem>
            <TaskItem label="Firefox">
                <svg width="34" height="34" viewBox="0 0 34 34">
                    <circle cx="18" cy="15" r="13" fill="#24508f" /><path d="M14 4c5-2.500 11-.5 14 4l-9 4-5-2z" fill="#75aee3" />
                    <path d="M3 6c1 1 2 2 3.500 2.500 2-2 4.500-3 7-3-1.500 1.500-1.500 3-.5 4.500l4 1.500c0 2-3 3-4 4.500 0 6 8 7 12 2 2-3 2-6 1-10 4 4 6 7 5.500 12C30.500 27.500 25 32.500 17 32.500S1.500 26 1.500 18C1.500 13 2 9 3 6z" fill="#e0631a" />
                    <path d="M27 5c5 4 6 9 5.500 14C31 27 25 32 18 32c8-3 13-10 11-19z" fill="#fbc433" />
                    <path d="M3 17c3 8 9 12 17 11-7 5-16 1-17-11z" fill="#b33a0c" />
                </svg>
            </TaskItem>
            <TaskItem label="Excel">
                <OfficeIcon dark="#2f8a33" mid="#3a9a42" light="#dff0d8">
                    <path d="M5 5h7l3 5 4-6h5l-6 9 5 8h-7l-3-5-4 6H4l7-9z" fill="#2f8a33" />
                    <path d="m16 19 14-3v13H12z" fill="#fff" stroke="#7fb786" strokeWidth=".8" /><path d="m15 22 14-2M14 25l15-1M20 19l-2 9M25 18l-1 10" stroke="#8fc596" />
                </OfficeIcon>
            </TaskItem>
            <TaskItem label="Text editor">
                <svg width="34" height="34" viewBox="0 0 34 34">
                    <path d="M2 1.500h31v9h-2l-2-3h-6v21l3 2v2H12v-2l3-2v-21H8l-3 3H2z" fill="#2978c4" stroke="#0d2c63" strokeWidth="1.500" />
                    <path d="M2.500 13.500h13v19h-13z" fill="#f5f5f5" stroke="#222" /><path d="M4 18h8M4 22h8M4 26h6" stroke="#777" />
                    <path d="m11 16 4 0 12 7-2 4-12-7z" fill="#f6a623" stroke="#5c3a0a" /><path d="m10 15 4 1-2 3z" fill="#222" /><path d="m25 22 3 2-2 3-3-1z" fill="#d86464" />
                </svg>
            </TaskItem>
            <TaskItem label="Explorer">
                <svg width="34" height="32" viewBox="0 0 34 32">
                    <path d="M2 4h12l2 3h15v23H2z" fill="#ecd485" stroke="#c3a44f" /><path d="M4 3h6v3H4z" fill="#3aa648" /><path d="M12 5h6v3h-6z" fill="#d85a3a" /><path d="M20 7h7v3h-7z" fill="#4a8fd0" />
                    <path d="M2 10h30v20H2z" fill="#f7e7a8" stroke="#cfb464" /><path d="M6 30V20h22v10h-5v-6H11v6z" fill="#a8dcf2" stroke="#4c9cc6" />
                </svg>
            </TaskItem>
            <TaskItem label="Media Player">
                <svg width="30" height="28" viewBox="0 0 30 28">
                    <path d="M8 3h18v22H8z" fill="#8ec4e2" stroke="#4b8cb3" /><path d="M5 2h18v23H5z" fill="#a5d3ea" stroke="#4b8cb3" /><path d="M1 2h19v24H1z" fill="#c0e1f1" stroke="#5596bb" />
                    <circle cx="11" cy="14" r="8.500" fill="#ef7d2b" stroke="#fff" /><path d="M8.500 9v10l8-5z" fill="#fff" />
                </svg>
            </TaskItem>
            <TaskItem label="Word" open stack><OfficeIcon letter="W" dark="#1d58ad" mid="#2f68b8" light="#dbe8f8" /></TaskItem>
            <TaskItem label="PowerPoint">
                <OfficeIcon letter="P" dark="#d4541a" mid="#d8643a" light="#fbe1d3">
                    <path d="m18 18 12-4-2 15H12z" fill="#fff" stroke="#d8643a" strokeWidth=".7" /><ellipse cx="23" cy="20" rx="4" ry="3" fill="#e2673a" />
                </OfficeIcon>
            </TaskItem>
            <TaskItem label="Chrome" open>
                <svg width="30" height="30" viewBox="0 0 30 30">
                    <path d="M15 15 2.900 8A14 14 0 0 1 27.100 8z" fill="#dc3f33" /><path d="M15 15 27.100 8A14 14 0 0 1 15 29z" fill="#fbd12f" /><path d="M15 15v14A14 14 0 0 1 2.900 8z" fill="#3fa648" />
                    <path d="M15 8.500h12.500l-.4-.8a14 14 0 0 0-24.200.3l6 10z" fill="#dc3f33" /><path d="M15 8.500h12.500A14 14 0 0 1 15 29l6-10z" fill="#fbd12f" />
                    <circle cx="15" cy="15" r="6.500" fill="#fff" /><circle cx="15" cy="15" r="5" fill="#3c7cc4" />
                </svg>
            </TaskItem>
            <TaskItem label="Outlook" open stack>
                <OfficeIcon letter="O" dark="#dd9414" mid="#dba01f" light="#fcecb0">
                    <path d="m17 23 13-4v10H12z" fill="#fff" stroke="#dba01f" strokeWidth=".7" /><circle cx="26" cy="14" r="5" fill="#fff6dc" stroke="#dba01f" /><path d="M26 11v3.500l2.500-2" fill="none" stroke="#b9831a" />
                </OfficeIcon>
            </TaskItem>
            <TaskItem label="FileZilla" open>
                <svg width="32" height="32" viewBox="0 0 32 32">
                    <path d="M1 1h30v30H1z" fill="#ae0c0c" stroke="#ae0c0c" strokeWidth="2" strokeDasharray="3 2" /><path d="M2 2h28v28H2z" fill="#b00c0c" />
                    <path d="M7.500 24 11 7.500h11M9.500 15h9M15 15.500h9l-9.500 9.500H24" fill="none" stroke="#fff" strokeWidth="3" />
                </svg>
            </TaskItem>
            <TaskItem label="Lync" open>
                <OfficeIcon letter="L" dark="#176b87" mid="#38a3bf" light="#cdeef5">
                    <path d="M13 20a7 7 0 0 1 13-5M28 18a7 7 0 0 1-13 6" fill="none" stroke="#fff" strokeWidth="4" /><path d="M13 20a7 7 0 0 1 13-5M28 18a7 7 0 0 1-13 6" fill="none" stroke="#7fc3d8" strokeWidth="2" />
                    <path d="M21.500 21h9.500v9.500h-9.500z" fill="#c2412e" stroke="#7f2a1e" />
                </OfficeIcon>
            </TaskItem>

            <div className="ml-auto flex">
                <TrayItem label="Updates"><path d="M3 3h9v13H3z" fill="#8cc3e6" stroke="#4e86b0" /><path d="M5 5h5v4H5z" fill="#fff" /><path d="M9 2c6-1 10 3 7 8M1 13c5 3 10 0 13-4" fill="none" stroke="#e5a13a" strokeWidth="1.800" /></TrayItem>
                <TrayItem label="Dropbox"><path d="m5 1 4 3-4 3-4-3zM13 1l4 3-4 3-4-3zM5 7l4 3-4 3-4-3zM13 7l4 3-4 3-4-3zM9 11l4 3-4 3-4-3z" fill="#3f93da" stroke="#dcecf9" strokeWidth=".6" /><circle cx="13.500" cy="13.500" r="4" fill="#2c9a3c" /><path d="m11.500 13.500 1.500 1.500 2.500-3" fill="none" stroke="#fff" /></TrayItem>
                <TrayItem label="OneNote"><path d="M1.500 1.500h15v15h-15z" fill="#fff" stroke="#80247c" strokeWidth="2" /><text x="9" y="14" textAnchor="middle" fontFamily="Liberation Serif" fontSize="13" fontWeight="bold" fill="#80247c" stroke="#80247c">N</text></TrayItem>
                <TrayItem label="Sync"><circle cx="9" cy="8" r="7" fill="#d9dbdd" /><path d="M4 9c0-5 7-6 8-1 0 3-2 4-3 8" fill="none" stroke="#94989c" strokeWidth="1.800" /><path d="M3 10 7 8l-1 5z" fill="#fff" /></TrayItem>
                <TrayItem label="Security"><rect x="1.500" y="1.500" width="15" height="15" rx="1.500" fill="#5cae3c" stroke="#dff0d4" /><path d="M9 3.500 14 5v4c0 3-2 4.500-5 6-3-1.500-5-3-5-6V5z" fill="#fff" /><path d="M9 4v11M4 9h10" stroke="#5cae3c" strokeWidth="1.500" /></TrayItem>
                <TrayItem label="Drive"><path d="M6 2h6l5.500 9.500h-6z" fill="#f7cb3b" /><path d="M6 2 .5 11.500l3 5L9 7z" fill="#27a05a" /><path d="M3.500 16.500h11l3-5h-11z" fill="#3c74d8" /></TrayItem>
                <TrayItem label="Mail"><path d="M4 2h10l3 4-2 6-5 1-2 4-1-4-5-2-1-6z" fill="#f5f5f5" stroke="#7d3a36" strokeWidth=".7" /><path d="M4 10V4l5 4.500L14 4v6" fill="none" stroke="#cc2f2c" strokeWidth="2" /></TrayItem>
                <TrayItem label="Transfer"><path d="M7 1v3h5c5 2 6 8 1 11l-3 2-5-2C-.5 13-.5 6 4 4z" fill="#e06a1c" stroke="#2a1509" strokeWidth="1.500" /><path d="M4 9h9l-1.500 3h-5z" fill="#a8abaf" stroke="#2a1509" strokeWidth="1.500" /></TrayItem>
                <TrayItem label="Network"><path d="M5.500 5.500h11v8h-11z" fill="#878d93" stroke="#fff" strokeWidth="1.400" /><path d="M8 16.500h7M11.500 14v2M2 1v4h4V1M4 5v9h2" fill="none" stroke="#fff" strokeWidth="1.500" /></TrayItem>
                <TrayItem label="Volume"><path d="M1.500 6.500h3L9 2v14l-4.500-4.500h-3z" fill="#fff" stroke="#62676c" strokeWidth=".8" /><path d="M11 6.500c1 1.500 1 3.500 0 5M13 4.500c2 2.500 2 6.500 0 9M15 2.500c3 4 3 9 0 13" fill="none" stroke="#fff" /></TrayItem>
                <TrayItem label="Outlook mail"><rect x="1.500" y="1.500" width="15" height="15" rx="1.500" fill="#efa51e" stroke="#fdf0c8" /><text x="9" y="14" textAnchor="middle" fontFamily="Liberation Serif" fontSize="13" fontWeight="bold" fill="#fff">O</text></TrayItem>
                <TrayItem label="Snagit"><rect x="1.500" y="1.500" width="15" height="15" rx="1.500" fill="#e8831c" stroke="#fde3c8" /><text x="9" y="14" textAnchor="middle" fontFamily="Liberation Serif" fontSize="13" fontWeight="bold" fill="#fff">S</text></TrayItem>
                <TrayItem label="Disk warning"><path d="M5 1.500h12v9H5z" fill="#333c45" stroke="#e5e7e9" /><path d="M1.500 8.500h8v8h-8z" fill="#eef0f1" stroke="#333" /><path d="M3 12h5" stroke="#333" /><path d="M12.500 8 18 17.500H7z" fill="#f5cf24" stroke="#a88209" strokeWidth=".6" /><path d="M12.500 11v3.500M12.500 15.500v1" stroke="#222" strokeWidth="1.300" /></TrayItem>
                <button type="button" className="flex w-[74px] flex-col items-center justify-center pl-1 leading-[17px] text-white">
                    <span>12:20 PM</span>
                    <span>10/14/2013</span>
                </button>
                <button type="button" aria-label="Show desktop" className="w-[14px] border border-[#6c7177] bg-[linear-gradient(135deg,#c9cdd1,#93979b)]" />
            </div>
        </nav>
    );
}

export default function App() {
    return (
        <div className="flex h-screen flex-col overflow-hidden bg-[#babfc4] font-['Open_Sans',sans-serif] text-[11px]">
            <Header />

            {/* Ribbon */}
            <div className="flex shrink-0 border-b border-[#83888e] bg-[linear-gradient(#fff,#fcfcfd_60%,#eef0f2)]">
                <ClipboardGroup />
                <FontGroup />
                <ParagraphGroup />
                <StylesGroup />
                <EditingGroup />
                <div className="w-[18px] shrink-0" />
            </div>
            <QuickAccess />

            {/* Document */}
            <div className="flex min-h-0 flex-1">
                <main className="min-w-0 flex-1 overflow-hidden bg-[linear-gradient(#cdd0d5,#b8bbc0)] pl-[3px] pt-[21px]">
                    <article className="mx-auto h-full w-[817px] bg-white pt-[128px] shadow-[0_0_8px_3px_rgba(70,75,85,0.55)]">
                        <ActorsTable />
                    </article>
                </main>
                <ScrollBar />
            </div>

            <StatusBar />
            <Taskbar />
        </div>
    );
}
